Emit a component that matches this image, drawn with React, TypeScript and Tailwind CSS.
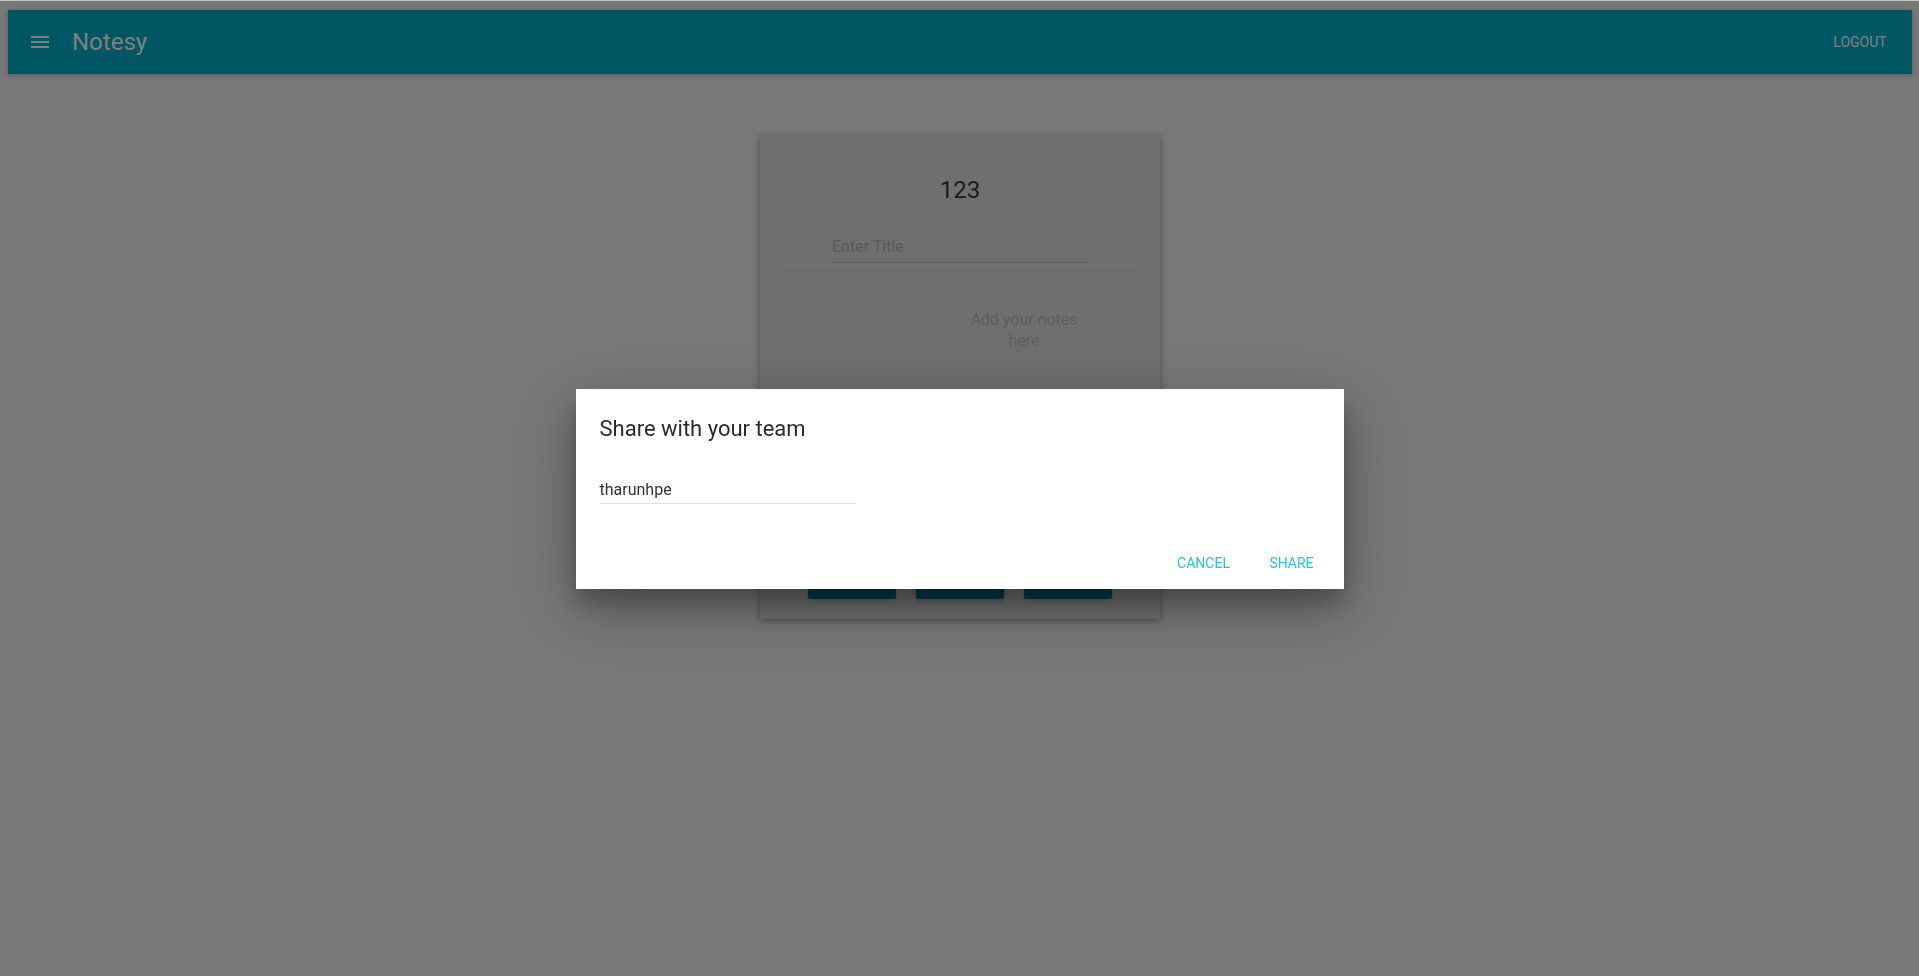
const MenuIcon = () => (
  <svg width="24" height="24" viewBox="0 0 24 24" fill="currentColor">
    <path d="M3 18h18v-2H3v2zm0-5h18v-2H3v2zm0-7v2h18V6H3z" />
  </svg>
);

const App = () => {
  return (
    <div className="min-h-screen bg-[#f0f0f0] pt-[10px] pl-[8px] pr-[7px]" style={{ fontFamily: 'Roboto, "Noto Sans", sans-serif' }}>
      {/* top app bar */}
      <header className="h-[64px] bg-[#00acc4] flex items-center pl-[20px] pr-[8px] shadow-[0_1px_6px_rgba(0,0,0,0.12),0_1px_4px_rgba(0,0,0,0.12)]">
        <span className="text-white">
          <MenuIcon />
        </span>
        <span className="ml-[20px] text-[24px] text-white">Notesy</span>
        <button className="ml-auto w-[88px] h-[36px] text-[14px] uppercase text-white">Logout</button>
      </header>

      {/* note editor card */}
      <div className="mt-[61px] mx-auto w-[400px] bg-[#dedede] px-[20px] pt-[39px] pb-[20px] shadow-[0_2px_8px_rgba(0,0,0,0.16),0_2px_6px_rgba(0,0,0,0.2)]">
        <h1 className="text-center text-[24px] leading-[32px] text-[#383838]">123</h1>
        <div className="mt-[29px] mx-auto w-[256px] pb-[3px] border-b border-[#c8c8c8] text-[16px] leading-[24px] text-[#b4b4b4]">
          Enter Title
        </div>
        <div className="mt-[7px] h-px bg-[#cccccc]" />
        <div className="h-[292px] pt-[38px] pl-[180px]">
          <div className="w-[128px] text-center text-[16px] leading-[21px] text-[#bdbdbd]">Add your notes here</div>
        </div>
        <div className="flex justify-center gap-[20px]">
          <button className="w-[88px] h-[36px] rounded-[2px] bg-[#00748a] text-white text-[14px] font-medium uppercase shadow-[0_1px_6px_rgba(0,0,0,0.12),0_1px_4px_rgba(0,0,0,0.12)]">Save</button>
          <button className="w-[88px] h-[36px] rounded-[2px] bg-[#00748a] text-white text-[14px] font-medium uppercase shadow-[0_1px_6px_rgba(0,0,0,0.12),0_1px_4px_rgba(0,0,0,0.12)]">Clear</button>
          <button className="w-[88px] h-[36px] rounded-[2px] bg-[#00748a] text-white text-[14px] font-medium uppercase shadow-[0_1px_6px_rgba(0,0,0,0.12),0_1px_4px_rgba(0,0,0,0.12)]">Share</button>
        </div>
      </div>

      {/* modal backdrop + dialog */}
      <div className="fixed inset-0 bg-black/50 flex items-center justify-center pt-[2px]">
        <div className="w-[768px] bg-white shadow-[0_19px_60px_rgba(0,0,0,0.30),0_15px_20px_rgba(0,0,0,0.22)]">
          <h3 className="px-[24px] pt-[24px] pb-[20px] text-[22px] leading-[32px] text-[#2b2b2b]">Share with your team</h3>
          <div className="px-[24px]">
            <div className="mt-[13px] w-[256px] pb-[1px] border-b border-[#e0e0e0] text-[16px] leading-[24px] text-[#333333]">
              tharunhpe
            </div>
          </div>
          <div className="mt-[33px] p-[8px] flex justify-end">
            <button className="w-[88px] h-[36px] text-[14px] uppercase text-[#26c3d9]">Cancel</button>
            <button className="w-[88px] h-[36px] text-[14px] uppercase text-[#26c3d9]">Share</button>
          </div>
        </div>
      </div>

      <div className="fixed top-0 left-0 right-0 h-px bg-[#c4c4c4]" />
    </div>
  );
};

export default App;
